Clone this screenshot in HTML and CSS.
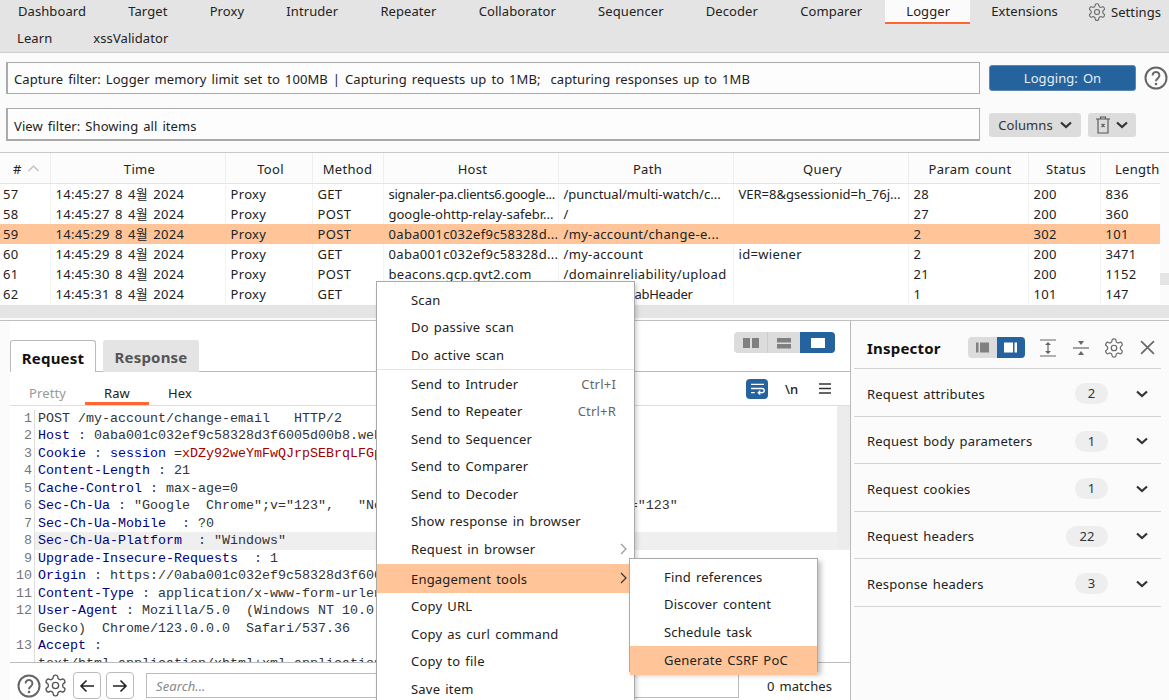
FILE: index.html
```html
<!DOCTYPE html>
<html lang="en">
<head>
<meta charset="utf-8">
<title>Burp Suite Logger</title>
<link rel="stylesheet" href="styles.css">
</head>
<body>
<svg class="defs" width="0" height="0" aria-hidden="true">
  <symbol id="gear" viewBox="0 0 24 24"><path d="M12.22 2h-.44a2 2 0 0 0-2 2v.18a2 2 0 0 1-1 1.73l-.43.25a2 2 0 0 1-2 0l-.15-.08a2 2 0 0 0-2.73.73l-.22.38a2 2 0 0 0 .73 2.73l.15.1a2 2 0 0 1 1 1.72v.51a2 2 0 0 1-1 1.74l-.15.09a2 2 0 0 0-.73 2.73l.22.38a2 2 0 0 0 2.73.73l.15-.08a2 2 0 0 1 2 0l.43.25a2 2 0 0 1 1 1.73V20a2 2 0 0 0 2 2h.44a2 2 0 0 0 2-2v-.18a2 2 0 0 1 1-1.73l.43-.25a2 2 0 0 1 2 0l.15.08a2 2 0 0 0 2.73-.73l.22-.39a2 2 0 0 0-.73-2.73l-.15-.08a2 2 0 0 1-1-1.74v-.5a2 2 0 0 1 1-1.74l.15-.09a2 2 0 0 0 .73-2.73l-.22-.38a2 2 0 0 0-2.73-.73l-.15.08a2 2 0 0 1-2 0l-.43-.25a2 2 0 0 1-1-1.73V4a2 2 0 0 0-2-2z" fill="none" stroke="currentColor" stroke-width="1.3"/><circle cx="12" cy="12" r="3" fill="none" stroke="currentColor" stroke-width="1.3"/></symbol>
  <symbol id="chev" viewBox="0 0 12 8"><path d="M1 1.500 6 6l5-4.500" fill="none" stroke="currentColor" stroke-width="2.200"/></symbol>
  <symbol id="help" viewBox="0 0 24 24"><circle cx="12" cy="12" r="10.500" fill="none" stroke="currentColor" stroke-width="2"/><path d="M8.600 9.400a3.400 3.400 0 1 1 5.200 2.900c-1.200.8-1.800 1.400-1.800 2.900" fill="none" stroke="currentColor" stroke-width="2"/><circle cx="12" cy="18" r="1.300" fill="currentColor"/></symbol>
</svg>

<header class="navbar">
  <nav class="nav-row">
    <span class="nav-tab first">Dashboard</span>
    <span class="nav-tab">Target</span>
    <span class="nav-tab">Proxy</span>
    <span class="nav-tab">Intruder</span>
    <span class="nav-tab">Repeater</span>
    <span class="nav-tab">Collaborator</span>
    <span class="nav-tab">Sequencer</span>
    <span class="nav-tab">Decoder</span>
    <span class="nav-tab">Comparer</span>
    <span class="nav-tab active">Logger</span>
    <span class="nav-tab">Extensions</span>
    <span class="nav-settings"><svg class="ico-gear-lg"><use href="#gear"/></svg>Settings</span>
  </nav>
  <nav class="nav-row second">
    <span class="nav-tab first">Learn</span>
    <span class="nav-tab">xssValidator</span>
  </nav>
</header>

<section class="filters">
  <div class="filter-row capture">
    <div class="filter-box">Capture filter: Logger memory limit set to 100MB | Capturing requests up to 1MB;&nbsp; capturing responses up to 1MB</div>
    <button class="btn-logging">Logging: On</button>
    <svg class="ico-help"><use href="#help"/></svg>
  </div>
  <div class="filter-row view">
    <div class="filter-box thick">View filter: Showing all items</div>
    <button class="btn-grey btn-columns">Columns<svg class="ico-chev"><use href="#chev"/></svg></button>
    <button class="btn-grey btn-trash">
      <svg class="ico-trash" viewBox="0 0 14 18"><path d="M0 3h14M4.500 3V1h5v2M2 3v14h10V3M5.500 8l3 3M8.500 8l-3 3" fill="none" stroke="#555" stroke-width="1.100"/></svg>
      <svg class="ico-chev"><use href="#chev"/></svg>
    </button>
  </div>
</section>

<section class="log">
  <table class="log-table">
    <colgroup>
      <col class="c-num"><col class="c-time"><col class="c-tool"><col class="c-method"><col class="c-host"><col class="c-path"><col class="c-query"><col class="c-param"><col class="c-status"><col class="c-len">
    </colgroup>
    <thead>
      <tr>
        <th class="th-num"># <svg class="ico-sort" viewBox="0 0 12 7"><path d="M1 6l5-5 5 5" fill="none" stroke="#bbb" stroke-width="1.200"/></svg></th>
        <th>Time</th><th>Tool</th><th class="th-method">Method</th><th>Host</th><th>Path</th><th>Query</th><th>Param count</th><th>Status</th><th class="th-len">Length</th>
      </tr>
    </thead>
    <tbody>
      <tr><td class="td-num">57</td><td>14:45:27 8 4월 2024</td><td>Proxy</td><td>GET</td><td class="tighter">signaler-pa.clients6.google...</td><td class="tight">/punctual/multi-watch/c...</td><td class="tight">VER=8&amp;gsessionid=h_76j...</td><td>28</td><td>200</td><td>836</td></tr>
      <tr><td class="td-num">58</td><td>14:45:27 8 4월 2024</td><td>Proxy</td><td>POST</td><td class="tight">google-ohttp-relay-safebr...</td><td>/</td><td></td><td>27</td><td>200</td><td>360</td></tr>
      <tr class="selected"><td class="td-num">59</td><td>14:45:29 8 4월 2024</td><td>Proxy</td><td>POST</td><td>0aba001c032ef9c58328d...</td><td>/my-account/change-e...</td><td></td><td>2</td><td>302</td><td>101</td></tr>
      <tr><td class="td-num">60</td><td>14:45:29 8 4월 2024</td><td>Proxy</td><td>GET</td><td>0aba001c032ef9c58328d...</td><td>/my-account</td><td>id=wiener</td><td>2</td><td>200</td><td>3471</td></tr>
      <tr><td class="td-num">61</td><td>14:45:30 8 4월 2024</td><td>Proxy</td><td>POST</td><td>beacons.gcp.gvt2.com</td><td>/domainreliability/upload</td><td></td><td>21</td><td>200</td><td>1152</td></tr>
      <tr><td class="td-num">62</td><td>14:45:31 8 4월 2024</td><td>Proxy</td><td>GET</td><td>www.google.com</td><td class="tighter">/async/newtabHeader</td><td></td><td>1</td><td>101</td><td>147</td></tr>
    </tbody>
  </table>
  <div class="vscroll"></div>
  <div class="hscroll"></div>
</section>

<main class="lower">
  <div class="strip"></div>
  <section class="editor">
    <div class="msg-tabs">
      <span class="msg-tab current">Request</span>
      <span class="msg-tab">Response</span>
      <div class="layout-toggle">
        <span class="seg"><svg class="seg-ico" viewBox="0 0 16 12"><path d="M0 1h7v10H0zM9 1h7v10H9z" fill="#808080"/></svg></span>
        <span class="seg"><svg class="seg-ico" viewBox="0 0 16 12"><path d="M1 1h14v4.500H1zM1 7h14v4.500H1z" fill="#808080"/></svg></span>
        <span class="seg on"><svg class="seg-ico" viewBox="0 0 16 12"><path d="M1 1h14v10H1z" fill="#fff"/></svg></span>
      </div>
    </div>
    <div class="sub-tabs">
      <span class="sub-tab t-pretty dim">Pretty</span>
      <span class="sub-tab t-raw current">Raw</span>
      <span class="sub-tab t-hex">Hex</span>
      <div class="sub-tools">
        <span class="wrap-btn"><svg class="wrap-ico" viewBox="0 0 16 14"><path d="M1 2.500h14M1 7h12a2 2 0 0 1 0 4.500H9M11 9.500l-2.200 2 2.200 2M1 11.500h4" fill="none" stroke="#fff" stroke-width="1.400"/></svg></span>
        <span class="newline-btn">\n</span>
        <svg class="menu-ico" viewBox="0 0 12 11"><path d="M0 1h12M0 5.500h12M0 10h12" stroke="#333" stroke-width="1.600"/></svg>
      </div>
    </div>
    <div class="code-wrap">
      <div class="code">
        <div class="line"><span class="ln">1</span><span class="lc">POST /my-account/change-email   HTTP/2</span></div>
        <div class="line"><span class="ln">2</span><span class="lc"><b>Host</b> : 0aba001c032ef9c58328d3f6005d00b8.web-security-academy.net</span></div>
        <div class="line"><span class="ln">3</span><span class="lc"><b>Cookie</b> : <b class="attr">session</b> =<i>xDZy92weYmFwQJrpSEBrqLFGpXn2kQ7v</i></span></div>
        <div class="line"><span class="ln">4</span><span class="lc"><b>Content-Length</b> : 21</span></div>
        <div class="line"><span class="ln">5</span><span class="lc"><b>Cache-Control</b> : max-age=0</span></div>
        <div class="line"><span class="ln">6</span><span class="lc"><b>Sec-Ch-Ua</b> : "Google  Chrome";v="123",   "Not:A-Brand";v="8",  "Chromium";v="123"</span></div>
        <div class="line"><span class="ln">7</span><span class="lc"><b>Sec-Ch-Ua-Mobile</b>  : ?0</span></div>
        <div class="line hl"><span class="ln">8</span><span class="lc"><b>Sec-Ch-Ua-Platform</b>  : "Windows"</span></div>
        <div class="line"><span class="ln">9</span><span class="lc"><b>Upgrade-Insecure-Requests</b>  : 1</span></div>
        <div class="line"><span class="ln">10</span><span class="lc"><b>Origin</b> : https://0aba001c032ef9c58328d3f6005d00b8.web-security-academy.net</span></div>
        <div class="line"><span class="ln">11</span><span class="lc"><b>Content-Type</b> : application/x-www-form-urlencoded</span></div>
        <div class="line"><span class="ln">12</span><span class="lc"><b>User-Agent</b> : Mozilla/5.0  (Windows NT 10.0; Win64; x64) AppleWebKit/537.36</span></div>
        <div class="line"><span class="ln"></span><span class="lc">Gecko)  Chrome/123.0.0.0  Safari/537.36</span></div>
        <div class="line"><span class="ln">13</span><span class="lc"><b>Accept</b> :</span></div>
        <div class="line"><span class="ln"></span><span class="lc">text/html,application/xhtml+xml,application/xml</span></div>
      </div>
      <div class="code-scroll"></div>
    </div>
    <div class="search-bar">
      <svg class="ico-help-sm"><use href="#help"/></svg>
      <svg class="ico-gear-md"><use href="#gear"/></svg>
      <button class="arrow-btn"><svg class="arrow-ico" viewBox="0 0 16 14"><path d="M15 7H2M7.500 1.500 2 7l5.500 5.500" fill="none" stroke="#222" stroke-width="1.600"/></svg></button>
      <button class="arrow-btn"><svg class="arrow-ico" viewBox="0 0 16 14"><path d="M1 7h13M8.500 1.500 14 7l-5.500 5.500" fill="none" stroke="#222" stroke-width="1.600"/></svg></button>
      <div class="search-input">Search...</div>
      <span class="matches">0 matches</span>
    </div>
  </section>

  <aside class="inspector">
    <div class="insp-head">
      <span class="insp-title">Inspector</span>
      <div class="insp-toggle">
        <span class="iseg"><svg class="iseg-ico" viewBox="0 0 13 11"><path d="M0 .5h2.500v10H0zM4 .5h9v10H4z" fill="#808080"/></svg></span>
        <span class="iseg on"><svg class="iseg-ico" viewBox="0 0 13 11"><path d="M0 .5h9v10H0zM10.500 .5H13v10h-2.500z" fill="#fff"/></svg></span>
      </div>
      <svg class="insp-ico first" viewBox="0 0 16 18"><path d="M0 1h16M0 17h16M8 4v10" stroke="#666" stroke-width="1.200"/><path d="M5 6h6L8 3zM5 12h6l-3 3z" fill="#666"/></svg>
      <svg class="insp-ico" viewBox="0 0 16 18"><path d="M0 9h16" stroke="#666" stroke-width="1.200"/><path d="M5 2h6L8 6zM5 16h6l-3-4z" fill="#666"/></svg>
      <svg class="insp-gear"><use href="#gear"/></svg>
      <svg class="insp-close" viewBox="0 0 14 14"><path d="M1 1l12 12M13 1 1 13" stroke="#666" stroke-width="1.500"/></svg>
    </div>
    <div class="insp-row"><span class="insp-label">Request attributes</span><span class="badge">2</span><svg class="ico-chev insp-chev"><use href="#chev"/></svg></div>
    <div class="insp-row"><span class="insp-label">Request body parameters</span><span class="badge">1</span><svg class="ico-chev insp-chev"><use href="#chev"/></svg></div>
    <div class="insp-row"><span class="insp-label">Request cookies</span><span class="badge">1</span><svg class="ico-chev insp-chev"><use href="#chev"/></svg></div>
    <div class="insp-row"><span class="insp-label">Request headers</span><span class="badge wide">22</span><svg class="ico-chev insp-chev"><use href="#chev"/></svg></div>
    <div class="insp-row"><span class="insp-label">Response headers</span><span class="badge">3</span><svg class="ico-chev insp-chev"><use href="#chev"/></svg></div>
  </aside>
</main>

<div class="ctx-menu">
  <div class="mi">Scan</div>
  <div class="mi">Do passive scan</div>
  <div class="mi">Do active scan</div>
  <div class="msep"></div>
  <div class="mi">Send to Intruder<span class="short">Ctrl+I</span></div>
  <div class="mi">Send to Repeater<span class="short">Ctrl+R</span></div>
  <div class="mi">Send to Sequencer</div>
  <div class="mi">Send to Comparer</div>
  <div class="mi">Send to Decoder</div>
  <div class="mi">Show response in browser</div>
  <div class="mi">Request in browser<svg class="sub-arrow" viewBox="0 0 7 12"><path d="M1 1l5 5-5 5" fill="none" stroke="#999" stroke-width="1.200"/></svg></div>
  <div class="mi hot">Engagement tools<svg class="sub-arrow" viewBox="0 0 7 12"><path d="M1 1l5 5-5 5" fill="none" stroke="#333" stroke-width="1.200"/></svg></div>
  <div class="mi">Copy URL</div>
  <div class="mi">Copy as curl command</div>
  <div class="mi">Copy to file</div>
  <div class="mi">Save item</div>
</div>

<div class="ctx-menu sub">
  <div class="mi">Find references</div>
  <div class="mi">Discover content</div>
  <div class="mi">Schedule task</div>
  <div class="mi hot">Generate CSRF PoC</div>
</div>
</body>
</html>
```
FILE: styles.css
```css
* { box-sizing: border-box; }
html, body { margin: 0; padding: 0; height: 100%; overflow: hidden; }
body {
  width: 1169px; height: 700px; position: relative;
  background: #fbfbfb; color: #222;
  font-family: "Noto Sans", "Noto Sans CJK KR", sans-serif;
  font-size: 13px; letter-spacing: .08px; word-spacing: 1.5px;
}
.defs { position: absolute; }
button { font: inherit; letter-spacing: inherit; word-spacing: inherit; border: 0; padding: 0; }

/* top nav */
.navbar { height: 53px; background: #e4e4e4; border-bottom: 1px solid #cfcfcf; }
.nav-row { display: flex; height: 25px; align-items: flex-start; }
.nav-row.second { height: 27px; }
.nav-tab { height: 24px; line-height: 23px; padding: 0 21.1px; white-space: nowrap; }
.nav-row.second .nav-tab { height: 27px; line-height: 27px; }
.nav-tab.first { padding-left: 18px; }
.nav-row.second .nav-tab.first { padding-left: 17px; padding-right: 20px; }
.nav-tab.active { background: #fbfbfb; border-bottom: 2px solid #ff6633; padding: 0 20px 0 21px; margin: 0 0 0 2px; }
.nav-settings { display: flex; align-items: center; height: 24px; margin-left: 8px; white-space: nowrap; }
.ico-gear-lg { width: 20px; height: 20px; margin-right: 4px; color: #666; }

/* filter area */
.filters { height: 99px; padding: 9px 0 0 6px; }
.filter-row { display: flex; align-items: center; }
.filter-row.capture { height: 32px; }
.filter-row.view { height: 33px; margin-top: 14px; }
.filter-box {
  width: 974px; height: 100%; flex: none; padding: 0 6px; line-height: 32px;
  background: #fdfdfd; border: 1px solid #aaa; border-left-width: 2px; white-space: pre;
}
.filter-box.thick { border-bottom-width: 2px; line-height: 34px; }
.btn-logging {
  width: 147px; height: 26px; margin: 0 8px 0 9px; background: #25639e; color: #e8eef5;
  border: 1px solid #5e87ae; border-radius: 3px;
}
.ico-help { width: 24px; height: 24px; color: #666; }
.btn-grey {
  height: 24px; background: #dcdcdc; border-radius: 3px; color: #333;
  display: flex; align-items: center; justify-content: center;
}
.btn-columns { width: 92px; margin-left: 9px; gap: 7px; padding-top: 1px; }
.btn-trash { width: 48px; margin-left: 7px; gap: 6px; }
.ico-chev { width: 12px; height: 8px; color: #333; }
.ico-trash { width: 14px; height: 18px; }

/* log table */
.log { height: 169px; position: relative; border-top: 1px solid #c8c8c8; border-bottom: 1px solid #c0c0c0; }
.log-table { border-collapse: collapse; table-layout: fixed; width: 1160px; background: #fff; }
.c-num { width: 50px; } .c-time { width: 175px; } .c-tool { width: 87px; } .c-method { width: 71px; }
.c-host { width: 175px; } .c-path { width: 175px; } .c-query { width: 175px; } .c-param { width: 120px; }
.c-status { width: 72px; } .c-len { width: 60px; }
.log-table th {
  height: 30px; font-weight: 400; border-right: 1px solid #eee; border-bottom: 1px solid #e4e4e4;
  padding: 2px 0 0 4px; background: #fcfcfc; letter-spacing: .3px;
}
.log-table th:last-child { border-right: 0; }
.log-table th.th-method { padding-left: 0; }
.log-table th.th-len { padding-left: 14px; }
.log-table th.th-num { text-align: left; padding-left: 13px; }
.ico-sort { width: 13px; height: 7px; vertical-align: 2px; }
.log-table td {
  height: 20px; padding: 0 0 0 5px; border-right: 1px solid #f4f4f4; white-space: nowrap; overflow: hidden; line-height: 20px;
  letter-spacing: .33px;
}
.log-table td.tight { letter-spacing: 0; }
.log-table td.tighter { letter-spacing: -.28px; }
.log-table td:last-child { border-right: 0; }
.log-table td.td-num { padding-left: 3px; }
.log-table tr.selected td { background: #ffc599; border-right-color: #ffc599; }
.vscroll { position: absolute; right: 0; top: 120px; width: 9px; height: 12px; background: #e4e4e4; }
.hscroll { position: absolute; left: 0; right: 0; top: 152px; height: 13px; background: #e4e4e4; }

/* lower split */
.lower { display: flex; height: 379px; background: #fff; }
.strip { width: 10px; background: #fbfbfb; flex: none; }
.editor { width: 841px; flex: none; background: #fff; border-right: 1px solid #bbb; display: flex; flex-direction: column; }
.msg-tabs { height: 51px; flex: none; display: flex; align-items: flex-end; gap: 7px; border-bottom: 1px solid #bbb; position: relative; padding-top: 19px; }
.msg-tab {
  height: 32px; font-size: 15px; font-weight: 700; letter-spacing: .2px; word-spacing: 0; line-height: 35px;
  background: #e4e4e4; color: #555; border-radius: 3px 3px 0 0; margin-bottom: -1px; width: 96px; text-align: center;
}
.msg-tab.current { background: #fff; color: #111; border: 1px solid #bbb; border-bottom: 0; width: 86px; line-height: 34px; }
.layout-toggle { position: absolute; right: 15px; top: 11px; display: flex; height: 21px; border-radius: 4px; overflow: hidden; background: #dcdcdc; }
.seg { width: 33px; display: flex; align-items: center; justify-content: center; }
.seg + .seg { border-left: 1px solid #ccc; }
.seg.on { background: #25639e; border: 0; width: 35px; }
.seg-ico { width: 16px; height: 12px; }
.sub-tabs { height: 34px; flex: none; display: flex; align-items: flex-start; border-bottom: 1px solid #ddd; }
.sub-tab { height: 33px; padding-top: 11px; line-height: 20px; text-align: center; }
.t-pretty { width: 75px; }
.t-raw { width: 64px; }
.t-hex { width: 62px; }
.sub-tab.dim { color: #999; }
.sub-tab.current { border-bottom: 3px solid #ff6633; }
.sub-tools { margin-left: auto; height: 33px; display: flex; align-items: center; padding-right: 19px; }
.wrap-btn { width: 22px; height: 20px; border-radius: 4px; background: #25639e; display: flex; align-items: center; justify-content: center; }
.wrap-ico { width: 15px; height: 13px; }
.newline-btn { margin-left: 17px; font-size: 13px; width: 14px; color: #222; font-weight: 500; letter-spacing: 0; }
.menu-ico { width: 12px; height: 11px; margin-left: 20px; }

.code-wrap { height: 257px; flex: none; position: relative; overflow: hidden; border-bottom: 1px solid #bbb; padding-top: 3.5px; }
.code { font-family: "Liberation Mono", monospace; font-size: 13.33px; line-height: 17.5px; letter-spacing: 0; word-spacing: 0; color: #333; }
.line { display: flex; height: 17.5px; white-space: pre; }
.line.hl .lc { background: #efefef; }
.ln { width: 22px; flex: none; text-align: right; padding-right: 2px; color: #777; border-right: 1px solid #ddd; box-sizing: content-box; }
.lc { flex: 1; padding-left: 3px; overflow: hidden; }
.lc b { font-weight: 400; color: #000080; }
.lc b.attr { color: #0000b0; }
.lc i { font-style: normal; color: #a00000; }
.code-scroll { position: absolute; right: 0; top: 0; width: 13px; height: 143px; background: #ececec; }

.search-bar { height: 37px; flex: none; display: flex; align-items: center; padding: 8px 0 0 7px; }
.ico-help-sm { width: 24px; height: 24px; color: #666; flex: none; }
.ico-gear-md { width: 25px; height: 25px; color: #555; margin-left: 2px; flex: none; }
.arrow-btn { width: 28px; height: 27px; margin-left: 5px; background: #fff; border: 1px solid #bbb; border-radius: 4px; display: flex; align-items: center; justify-content: center; }
.arrow-btn + .arrow-btn { margin-left: 5px; }
.arrow-ico { width: 16px; height: 14px; }
.search-input { width: 593px; height: 25px; margin-left: 12px; border: 1px solid #bbb; padding-left: 9px; line-height: 24px; font-style: italic; color: #888; flex: none; }
.matches { margin-left: 28px; white-space: nowrap; }

/* inspector */
.inspector { flex: 1; background: #fbfbfb; padding: 0 8px 0 3px; }
.insp-head { height: 48px; display: flex; align-items: center; padding: 6px 0 0 13px; border-bottom: 1px solid #d4d4d4; }
.insp-title { font-size: 15px; font-weight: 700; color: #111; letter-spacing: .2px; width: 101px; flex: none; }
.insp-toggle { display: flex; width: 57px; height: 21px; border-radius: 4px; overflow: hidden; background: #dcdcdc; flex: none; }
.iseg { flex: 1; display: flex; align-items: center; justify-content: center; }
.iseg.on { background: #25639e; }
.iseg-ico { width: 13px; height: 11px; }
.insp-ico { width: 16px; height: 18px; margin-left: 17px; flex: none; }
.insp-ico.first { margin-left: 15px; }
.insp-gear { width: 22px; height: 22px; color: #666; margin-left: 14px; flex: none; }
.insp-close { width: 15px; height: 15px; margin-left: 15px; flex: none; }
.insp-row { height: 47.5px; display: flex; align-items: center; padding: 3px 13px 0 13px; border-bottom: 1px solid #d4d4d4; }
.insp-label { flex: 1; letter-spacing: .2px; }
.badge { width: 33px; height: 21px; border-radius: 11px; background: #eee; line-height: 21px; text-align: center; color: #333; flex: none; }
.badge.wide { width: 42px; }
.insp-chev { margin-left: 28px; flex: none; }

/* context menus float above the panes */
.ctx-menu {
  position: absolute; left: 376px; top: 281px; width: 259px; height: 425px; background: #fff;
  border: 1px solid #aaa; box-shadow: 2px 2px 4px rgba(0,0,0,.18); padding-top: 4px;
}
.ctx-menu.sub { left: 629px; top: 558px; width: 189px; height: 114px; padding-top: 4px; box-shadow: 3px 3px 5px rgba(0,0,0,.25); }
.mi { height: 27.5px; padding-left: 34px; position: relative; white-space: nowrap; display: flex; align-items: center; letter-spacing: .2px; }
.mi.hot { background: #ffc599; }
.ctx-menu > .mi.hot { height: 29px; margin-top: 1px; padding-top: 2px; }
.ctx-menu.sub > .mi.hot { height: 29px; margin-top: 0; padding-top: 0; }
.msep { height: 1.5px; background: #e4e4e4; }
.short { margin-left: auto; padding-right: 18px; color: #666; }
.sub-arrow { position: absolute; right: 7px; top: 8px; width: 7px; height: 12px; }
```
